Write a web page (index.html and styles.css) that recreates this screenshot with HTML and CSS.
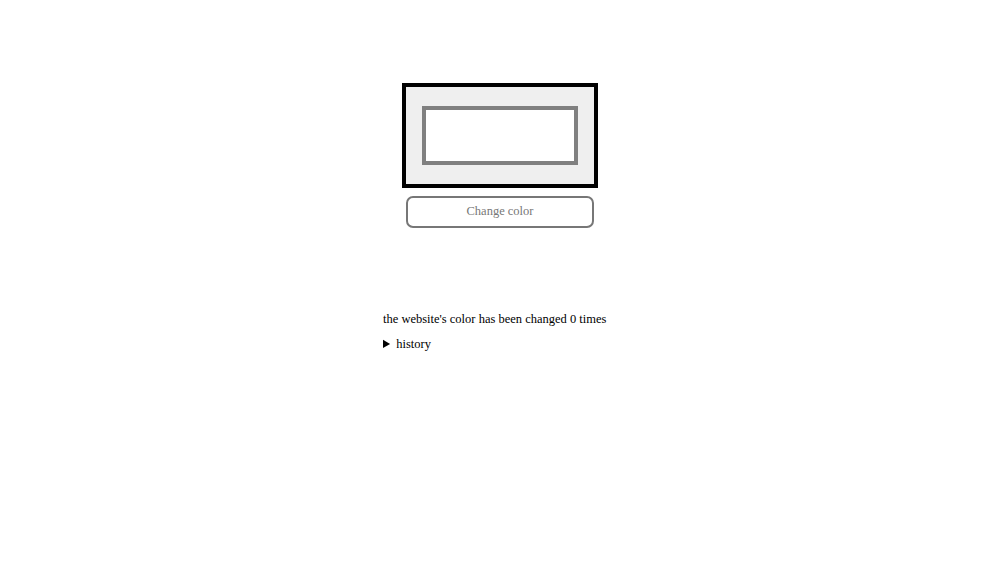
FILE: index.html
```html
<!DOCTYPE html>
<html>
<head>
<meta charset="utf-8">
<link rel="stylesheet" href="styles.css">
</head>
<body>
<main class="page">
  <section class="swatch-area">
    <div class="swatch">
      <div class="inner"></div>
    </div>
    <button class="change-btn">Change color</button>
  </section>
  <section class="info">
    <p class="count">the website's color has been changed 0 times</p>
    <details class="history">
      <summary>history</summary>
    </details>
  </section>
</main>
</body>
</html>
```
FILE: styles.css
```css
html, body {
  margin: 0;
  padding: 0;
  background: #ffffff;
}
body {
  font-family: "Liberation Serif", "Times New Roman", serif;
  color: #000;
}
.page {
  display: flex;
  flex-direction: column;
  align-items: center;
  padding-top: 83px;
}
.swatch-area {
  display: flex;
  flex-direction: column;
  align-items: center;
  gap: 8px;
}
.swatch {
  box-sizing: border-box;
  width: 196px;
  height: 105px;
  border: 4px solid #000;
  background: #efefef;
  padding: 19px 16px 0 16px;
}
.inner {
  box-sizing: border-box;
  width: 156px;
  height: 59px;
  border: 4px solid #808080;
  background: #fff;
}
.change-btn {
  box-sizing: border-box;
  width: 188px;
  height: 32px;
  border: 2px solid #777;
  border-radius: 7px;
  background: #fff;
  color: #777;
  font-family: "Liberation Serif", "Times New Roman", serif;
  font-size: 12.5px;
  padding: 0 0 1px 0;
}
.info {
  width: 234px;
  margin-top: 83px;
  font-size: 12.5px;
}
.count {
  margin: 0;
  line-height: 16px;
  white-space: nowrap;
}
.history {
  margin-top: 9px;
}
.history summary {
  line-height: 16px;
  cursor: pointer;
}
```
